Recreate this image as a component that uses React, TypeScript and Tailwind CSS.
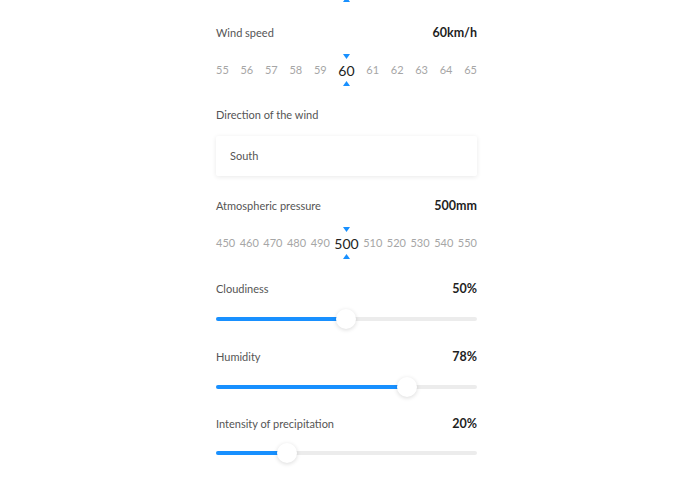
import React from 'react';

const font = { fontFamily: 'Lato, "Noto Sans", sans-serif' };

const Tri = ({ up }: { up?: boolean }) => (
  <svg width="7" height="5" viewBox="0 0 7 5" className="block">
    {up ? <polygon points="3.5,0 7,5 0,5" fill="#1890ff" /> : <polygon points="0,0 7,0 3.5,5" fill="#1890ff" />}
  </svg>
);

const Header = ({ label, value }: { label: string; value: string }) => (
  <div className="flex h-5 items-center justify-between">
    <span className="text-[11px] text-[#555]">{label}</span>
    <span className="text-[12.5px] font-bold text-[#1f1f1f]">{value}</span>
  </div>
);

const Picker = ({ items, selected }: { items: number[]; selected: number }) => (
  <div className="flex flex-col items-center">
    <Tri />
    <div className="mt-[3px] flex h-[16px] w-full items-center justify-between">
      {items.map((n) =>
        n === selected ? (
          <span key={n} className="text-[14px] text-[#222]">{n}</span>
        ) : (
          <span key={n} className="text-[11px] text-[#a6a6a6]">{n}</span>
        )
      )}
    </div>
    <div className="mt-[3px]">
      <Tri up />
    </div>
  </div>
);

const Slider = ({ pos }: { pos: number }) => (
  <div className="relative h-[22px]">
    <div className="absolute left-0 right-0 top-[9px] h-[4px] rounded-full bg-[#ececec]" />
    <div className="absolute left-0 top-[9px] h-[4px] rounded-full bg-[#1890ff]" style={{ width: pos }} />
    <div
      className="absolute top-[1px] h-[20px] w-[20px] rounded-full bg-white shadow-[0_1px_4px_rgba(0,0,0,0.15)]"
      style={{ left: pos - 10 }}
    />
  </div>
);

export default function App() {
  return (
    <div className="h-[494px] w-full overflow-hidden bg-white" style={font}>
      <div className="ml-[216px] flex w-[261px] flex-col">
        <div className="-mt-[3px] flex justify-center">
          <Tri up />
        </div>
        <div className="mt-[21px]">
          <Header label="Wind speed" value="60km/h" />
        </div>
        <div className="mt-[11px]">
          <Picker items={[55, 56, 57, 58, 59, 60, 61, 62, 63, 64, 65]} selected={60} />
        </div>
        <div className="mt-[19px] flex h-5 items-center text-[11px] text-[#555]">Direction of the wind</div>
        <div className="mt-[11px] flex h-[40px] items-center rounded-[2px] bg-white px-[14px] text-[11px] text-[#555] shadow-[0_1px_5px_rgba(0,0,0,0.09)]">
          South
        </div>
        <div className="mt-[20px]">
          <Header label="Atmospheric pressure" value="500mm" />
        </div>
        <div className="mt-[11px]">
          <Picker items={[450, 460, 470, 480, 490, 500, 510, 520, 530, 540, 550]} selected={500} />
        </div>
        <div className="mt-[20px]">
          <Header label="Cloudiness" value="50%" />
        </div>
        <div className="mt-[9px]">
          <Slider pos={130} />
        </div>
        <div className="mt-[17px]">
          <Header label="Humidity" value="78%" />
        </div>
        <div className="mt-[9px]">
          <Slider pos={191} />
        </div>
        <div className="mt-[16px]">
          <Header label="Intensity of precipitation" value="20%" />
        </div>
        <div className="mt-[8px]">
          <Slider pos={71} />
        </div>
      </div>
    </div>
  );
}
